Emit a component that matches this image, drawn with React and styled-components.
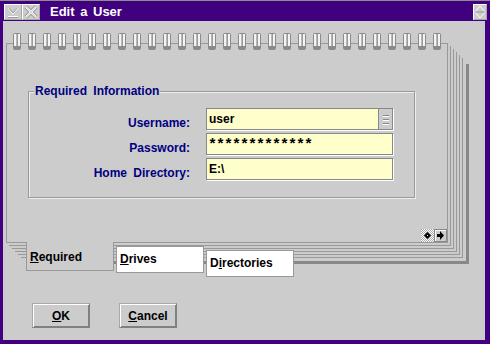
import React from "react";
import styled, { createGlobalStyle } from "styled-components";

const GlobalStyle = createGlobalStyle`
  html, body {
    margin: 0;
    padding: 0;
    background: #cccccc;
  }
  body {
    font-family: "Liberation Sans", Arial, sans-serif;
    font-size: 12px;
    font-weight: bold;
  }
  * {
    box-sizing: border-box;
  }
`;

const Window = styled.div`
  width: 490px;
  height: 344px;
  background: #400080;
  border-top: 1px solid #8c8c8c;
  padding: 0 5px 0 3px;
  display: flex;
  flex-direction: column;
`;

const TitleBar = styled.div`
  height: 20px;
  display: flex;
  align-items: flex-start;
  padding: 3px 0 0 1px;
  margin-right: -2px;
`;

const TitleButton = styled.div`
  width: ${(p) => p.$w || 18}px;
  height: 16px;
  background: #cccccc;
  border-top: 1px solid #ffffff;
  border-left: 1px solid #ffffff;
  border-right: 1px solid #a8a8a8;
  border-bottom: 1px solid #a8a8a8;
  display: flex;
  align-items: center;
  justify-content: center;
  svg {
    display: block;
  }
`;

const Title = styled.div`
  margin-left: 10px;
  color: #ffffff;
  font-size: 13px;
  line-height: 16px;
  word-spacing: 2px;
  flex: 1;
`;

const Client = styled.div`
  height: 319px;
  background: #cccccc;
  padding: 12px 0 0 3px;
  display: flex;
  flex-direction: column;
`;

const Notebook = styled.div`
  width: 442px;
`;

const RingRow = styled.div`
  display: flex;
  gap: 7px;
  height: 17px;
  padding-left: 7px;
  margin-bottom: -7px;
  position: relative;
  z-index: 1;
`;

const Page = styled.div`
  width: 442px;
  height: 200px;
  background: #cccccc;
  border: 1px solid #999999;
  display: flex;
  flex-direction: column;
  box-shadow: 2px 2px 0 #cccccc, 3px 3px 0 #999999, 5px 5px 0 #cccccc,
    6px 6px 0 #999999, 8px 8px 0 #cccccc, 9px 9px 0 #999999,
    11px 11px 0 #cccccc, 12px 12px 0 #999999, 14px 14px 0 #cccccc,
    15px 15px 0 #999999, 18px 18px 0 #cccccc, 21px 21px 0 #888888;
`;

const GroupBox = styled.div`
  width: 387px;
  height: 107px;
  margin: 47px 0 0 21px;
  border: 1px solid #999999;
  box-shadow: inset 1px 1px 0 #eeeeee, 1px 1px 0 #eeeeee;
`;

const Legend = styled.div`
  display: table;
  margin: -8px 0 0 5px;
  padding: 0 1px;
  background: #cccccc;
  color: #000080;
  line-height: 14px;
  word-spacing: 3px;
`;

const FormGrid = styled.div`
  display: grid;
  grid-template-columns: 161px 187px;
  column-gap: 16px;
  row-gap: 3px;
  margin-top: 10px;
`;

const Label = styled.div`
  text-align: right;
  align-self: end;
  color: #000080;
  line-height: 14px;
  word-spacing: 3px;
`;

const Field = styled.div`
  height: 22px;
  background: #ffffcc;
  border: 1px solid #888888;
  box-shadow: 1px 1px 0 #ffffff;
  display: flex;
  align-items: stretch;
  color: #000000;
  overflow: hidden;
`;

const FieldText = styled.div`
  flex: 1;
  padding-left: 2px;
  line-height: 20px;
`;

const Masked = styled.div`
  flex: 1;
  padding: 4px 0 0 1px;
  line-height: 16px;
  font-family: "Liberation Mono", "Courier New", monospace;
  font-size: 15px;
  letter-spacing: -1px;
`;

const Spin = styled.div`
  width: 14px;
  border-left: 1px solid #888888;
  background: #cccccc;
  display: flex;
  align-items: center;
  justify-content: center;
`;

const CornerRow = styled.div`
  margin-top: auto;
  align-self: flex-end;
  display: flex;
`;

const Checker = styled.div`
  width: 13px;
  height: 13px;
  background: repeating-conic-gradient(#ffffff 0 25%, #aaaaaa 0 50%) 0 0 / 2px
    2px;
  display: flex;
  align-items: center;
  justify-content: center;
`;

const ArrowButton = styled.div`
  width: 13px;
  height: 13px;
  background: #cccccc;
  border: 1px solid #888888;
  box-shadow: inset 1px 1px 0 #ffffff;
  display: flex;
  align-items: center;
  justify-content: center;
`;

const TabRow = styled.div`
  display: flex;
  align-items: flex-start;
  gap: 2px;
  padding-left: 20px;
  height: 35px;
`;

const Tab = styled.div`
  width: 88px;
  margin-top: ${(p) => p.$offset}px;
  border: 1px solid #999999;
  border-top: ${(p) => (p.$active ? "none" : "1px solid #999999")};
  background: ${(p) => (p.$active ? "#cccccc" : "#ffffff")};
  padding: ${(p) => (p.$active ? "8px 3px 6px" : "5px 3px 6px")};
  line-height: 14px;
  color: #000000;
  position: relative;
`;

const ButtonRow = styled.div`
  display: flex;
  gap: 29px;
  margin-top: 25px;
  padding-left: 26px;
`;

const Button = styled.div`
  width: 58px;
  height: 25px;
  background: #cccccc;
  border: 1px solid;
  border-color: #a8a8a8 #808080 #808080 #a8a8a8;
  box-shadow: inset 1px 1px 0 #ffffff, inset -1px -1px 0 #808080;
  display: flex;
  align-items: center;
  justify-content: center;
  color: #000000;
  line-height: 14px;
`;

const Ring = () => (
  <svg width="8" height="17" viewBox="0 0 8 17">
    <rect x="0.5" y="0.5" width="7" height="16" rx="1" fill="#b8b8b8" stroke="#8a8a8a" />
    <rect x="1" y="1" width="2" height="12" fill="#f4f4f4" />
    <rect x="4" y="1" width="1" height="12" fill="#9a9a9a" />
    <rect x="5" y="1" width="2" height="12" fill="#f4f4f4" />
    <rect x="1" y="13" width="6" height="3" fill="#8a8a8a" />
  </svg>
);

const rings = Array.from({ length: 29 });

export default function App() {
  return (
    <>
      <GlobalStyle />
      <Window>
        <TitleBar>
          <TitleButton>
            <svg width="16" height="14" viewBox="0 0 16 14">
              <polyline points="3,3 8,9 13,3" fill="none" stroke="#ffffff" strokeWidth="1" />
              <polyline points="4,3 8,8 12,3" fill="none" stroke="#999999" strokeWidth="1" />
              <line x1="3" y1="11.5" x2="13" y2="11.5" stroke="#ffffff" />
              <line x1="3" y1="12.5" x2="13" y2="12.5" stroke="#999999" />
            </svg>
          </TitleButton>
          <TitleButton>
            <svg width="16" height="14" viewBox="0 0 16 14">
              <line x1="3" y1="2" x2="13" y2="12" stroke="#999999" strokeWidth="4" />
              <line x1="13" y1="2" x2="3" y2="12" stroke="#999999" strokeWidth="4" />
              <line x1="3" y1="2" x2="13" y2="12" stroke="#ffffff" strokeWidth="2" />
              <line x1="13" y1="2" x2="3" y2="12" stroke="#ffffff" strokeWidth="2" />
              <line x1="3" y1="2" x2="13" y2="12" stroke="#cccccc" strokeWidth="0.8" />
              <line x1="13" y1="2" x2="3" y2="12" stroke="#cccccc" strokeWidth="0.8" />
            </svg>
          </TitleButton>
          <Title>Edit a User</Title>
          <TitleButton $w={14}>
            <svg width="12" height="14" viewBox="0 0 12 14">
              <polygon points="6,1 11,7 6,13 1,7" fill="none" stroke="#ffffff" />
              <line x1="1" y1="7" x2="11" y2="7" stroke="#999999" />
            </svg>
          </TitleButton>
        </TitleBar>
        <Client>
          <Notebook>
            <RingRow>
              {rings.map((_, i) => (
                <Ring key={i} />
              ))}
            </RingRow>
            <Page>
              <GroupBox>
                <Legend>Required Information</Legend>
                <FormGrid>
                  <Label>Username:</Label>
                  <Field>
                    <FieldText>user</FieldText>
                    <Spin>
                      <svg width="6" height="11" viewBox="0 0 6 11">
                        <rect x="0" y="1" width="6" height="1" fill="#888888" />
                        <rect x="0" y="2" width="6" height="1" fill="#ffffff" />
                        <rect x="0" y="5" width="6" height="1" fill="#888888" />
                        <rect x="0" y="6" width="6" height="1" fill="#ffffff" />
                        <rect x="0" y="9" width="6" height="1" fill="#888888" />
                        <rect x="0" y="10" width="6" height="1" fill="#ffffff" />
                      </svg>
                    </Spin>
                  </Field>
                  <Label>Password:</Label>
                  <Field>
                    <Masked>*************</Masked>
                  </Field>
                  <Label>Home Directory:</Label>
                  <Field>
                    <FieldText>E:\</FieldText>
                  </Field>
                </FormGrid>
              </GroupBox>
              <CornerRow>
                <Checker>
                  <svg width="7" height="7" viewBox="0 0 7 7">
                    <polygon points="3.5,0 7,3.5 3.5,7 0,3.5" fill="#000000" />
                    <rect x="3" y="3" width="1" height="1" fill="#ffffff" />
                  </svg>
                </Checker>
                <ArrowButton>
                  <svg width="9" height="9" viewBox="0 0 9 9">
                    <polygon points="1,3 4,3 4,0 8,4.5 4,9 4,6 1,6" fill="#000000" />
                  </svg>
                </ArrowButton>
              </CornerRow>
            </Page>
          </Notebook>
          <TabRow>
            <Tab $active $offset={-1}>
              <u>R</u>equired
            </Tab>
            <Tab $offset={3}>
              <u>D</u>rives
            </Tab>
            <Tab $offset={7}>
              D<u>i</u>rectories
            </Tab>
          </TabRow>
          <ButtonRow>
            <Button>
              <span>
                <u>O</u>K
              </span>
            </Button>
            <Button>
              <span>
                <u>C</u>ancel
              </span>
            </Button>
          </ButtonRow>
        </Client>
      </Window>
    </>
  );
}
